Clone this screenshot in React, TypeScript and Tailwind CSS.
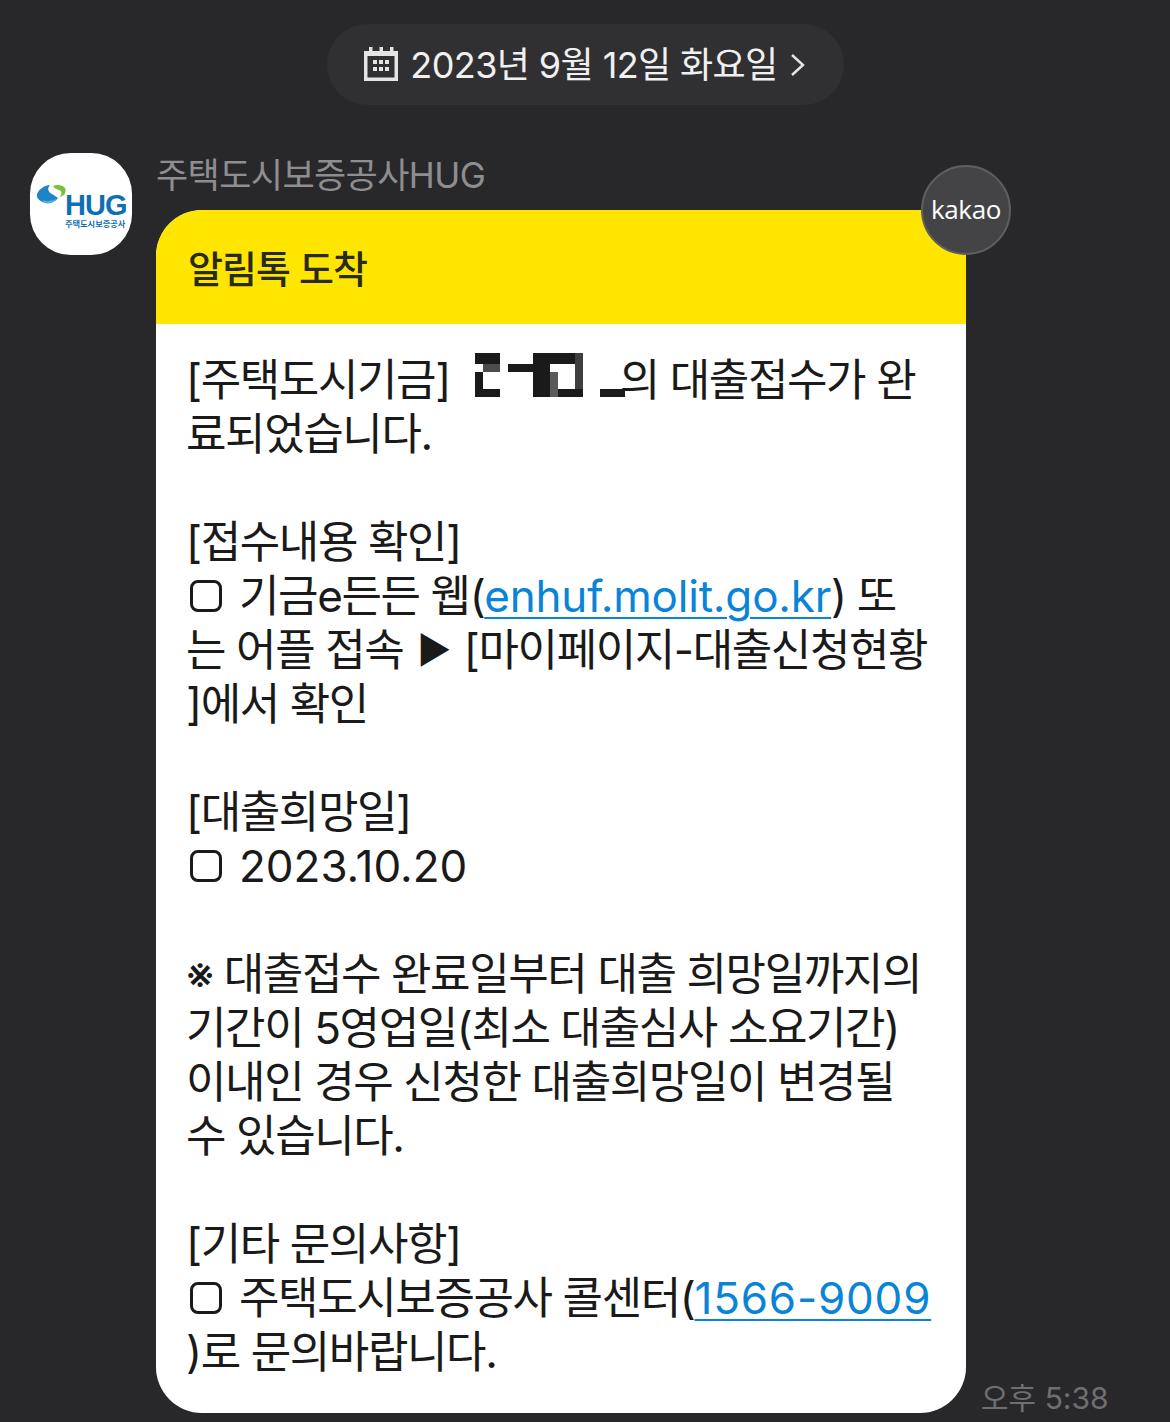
const FONT = "font-['Inter','Noto_Sans_CJK_KR',sans-serif]";

// blurred-out name in the first line of the message
function Censor() {
  return (
    <svg width="150" height="44" viewBox="0 0 150 44" className="inline-block shrink-0 relative mb-[10px] mr-[-5px] ml-[3px]">
      <rect x="0" y="0" width="25" height="11" fill="#1a1a1a" />
      <rect x="8" y="11" width="17" height="8" fill="#4c4c4c" />
      <rect x="0" y="19" width="8" height="25" fill="#1a1a1a" />
      <rect x="0" y="36" width="25" height="8" fill="#1a1a1a" />
      <rect x="33" y="11" width="25" height="8" fill="#1a1a1a" />
      <rect x="58" y="0" width="42" height="11" fill="#1a1a1a" />
      <rect x="58" y="11" width="17" height="33" fill="#1a1a1a" />
      <rect x="75" y="19" width="8" height="25" fill="#5a5a5a" />
      <rect x="100" y="0" width="8" height="36" fill="#3f3f3f" />
      <rect x="83" y="36" width="25" height="8" fill="#1a1a1a" />
      <rect x="125" y="36" width="25" height="8" fill="#1a1a1a" />
    </svg>
  );
}

function Line({ children, className = 'tracking-[-1.4px]' }: { children?: React.ReactNode; className?: string }) {
  return <div className={`h-[54px] leading-[54px] whitespace-pre flex items-center ${className}`}>{children}</div>;
}

function Box() {
  return <span className="inline-block w-[32px] h-[32px] border-[3.5px] border-[#1a1a1a] rounded-[8px] mr-[17px] ml-[4px] shrink-0" />;
}

function Linked({ children, className = '' }: { children: React.ReactNode; className?: string }) {
  return <span className={`text-[#0a84d6] underline decoration-[2px] underline-offset-[5px] ${className}`}>{children}</span>;
}

function HugLogo() {
  return (
    <div className="relative w-[102px] h-[102px] bg-white rounded-[40%] flex flex-col pt-[38px] pl-[35px] shrink-0">
      <svg width="32" height="22" viewBox="0 0 32 22" className="absolute left-[6px] top-[30px]">
        <path d="M1 11C3 6 9 2 14 2c-3 3-2 7 2 9 3 2 5 3 6 4-3 4-8 6-12 5C5 19 0 16 1 11Z" fill="#1f83c7" />
        <path d="M6 17c5 2 11 1 16-2-3 4-8 6-12 5-1 0-3-1-4-3Z" fill="#4cb0e4" />
        <path d="M17 3c4-2 10-1 12 2 2 4-1 8-5 9 2-3 2-6-1-7-3-1-5-2-6-4Z" fill="#7cbf3f" />
      </svg>
      <div className="font-['Liberation_Sans',sans-serif] font-bold text-[29px] leading-[28px] text-[#0f6fb3] tracking-[-0.9px]">HUG</div>
      <div className="text-[8.2px] leading-[10px] font-bold text-[#0f6fb3] whitespace-pre">주택도시보증공사</div>
    </div>
  );
}

export default function App() {
  return (
    <div className={`${FONT} h-[1422px] bg-[#28282a] overflow-hidden`}>
      <div className="pt-[24px] flex justify-center">
        <div className="w-[517px] h-[81px] rounded-full bg-[#303032] flex items-center justify-center gap-[12px] text-[#f0f0f0] text-[36px] tracking-[-0.6px]">
          <svg width="34" height="36" viewBox="0 0 34 36" fill="#e4e4e4">
            <path fillRule="evenodd" d="M0 4h34v30H0zM3.5 9v21.5h27V9z" />
            <path d="M5 0h3.5v6H5zM15.5 0H19v6h-3.5zM26 0h3.5v6H26z" />
            <path d="M9 13h4v4H9zM15 13h4v4h-4zM21 13h4v4h-4zM9 20h4v4H9zM15 20h4v4h-4zM21 20h4v4h-4z" />
          </svg>
          <span className="whitespace-pre">2023년 9월 12일 화요일</span>
          <svg width="16" height="24" viewBox="0 0 16 24" fill="none" stroke="#e4e4e4" strokeWidth="2.5">
            <path d="M2 2l11 10L2 22" />
          </svg>
        </div>
      </div>

      <div className="mt-[48px] pl-[30px] flex items-start gap-[24px]">
        <HugLogo />
        <div className="w-[810px] shrink-0">
          <div className="h-[57px] leading-[44px] text-[35px] text-[#8e8e90] whitespace-pre tracking-[-0.6px]">주택도시보증공사HUG</div>
          <div className="relative">
            <div className="absolute -top-[45px] -right-[45px] w-[90px] h-[90px] rounded-full bg-[#444446] border-2 border-[#5e5e60] text-white font-['Open_Sans',sans-serif] text-[26px] tracking-[-0.4px] pb-[2px] flex items-center justify-center z-10">kakao</div>
            <div className="rounded-[46px] overflow-hidden bg-white">
              <div className="h-[114px] bg-[#ffe600] pl-[32px] pt-[5px] flex items-center text-[38px] font-medium text-[#2a2a1a] tracking-[-1px]">알림톡 도착</div>
              <div className="pt-[29px] pb-[34px] pl-[30px] text-[#1a1a1a] text-[44px]">
                <Line>[주택도시기금]  <Censor />의 대출접수가 완</Line>
                <Line>료되었습니다.</Line>
                <Line />
                <Line>[접수내용 확인]</Line>
                <Line><Box />기금e든든 웹(<Linked className="tracking-[-0.2px]">enhuf.molit.go.kr</Linked>) 또</Line>
                <Line>는 어플 접속 <span className="text-[37px] ml-[3px] mr-[3px]">▶</span> [마이페이지-대출신청현황</Line>
                <Line>]에서 확인</Line>
                <Line />
                <Line>[대출희망일]</Line>
                <Line className="tracking-normal"><Box />2023.10.20</Line>
                <Line />
                <Line>※ 대출접수 완료일부터 대출 희망일까지의</Line>
                <Line>기간이 5영업일(최소 대출심사 소요기간)</Line>
                <Line>이내인 경우 신청한 대출희망일이 변경될</Line>
                <Line>수 있습니다.</Line>
                <Line />
                <Line>[기타 문의사항]</Line>
                <Line><Box />주택도시보증공사 콜센터(<Linked className="tracking-[0.8px]">1566-9009</Linked></Line>
                <Line>)로 문의바랍니다.</Line>
              </div>
            </div>
          </div>
        </div>
        <div className="self-end ml-[-9px] text-[#6f6f71] text-[30px] leading-[30px] whitespace-pre">오후 5:38</div>
      </div>
    </div>
  );
}
